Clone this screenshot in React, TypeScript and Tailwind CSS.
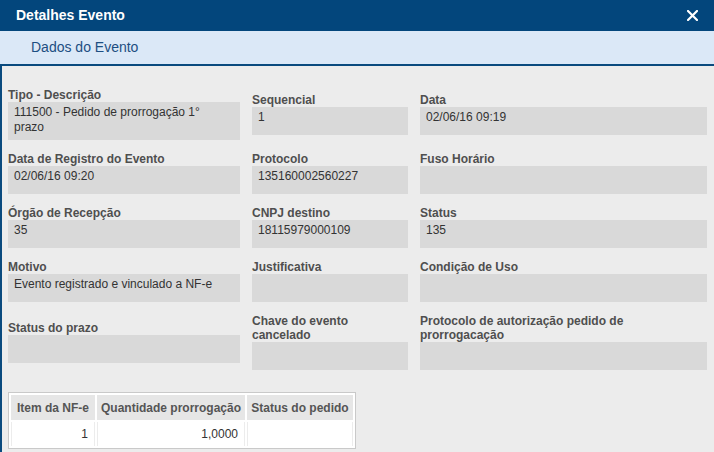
import React from "react";

type Field = { label: string; value?: string };

const fields: Field[] = [
  { label: "Tipo - Descrição", value: "111500 - Pedido de prorrogação 1° prazo" },
  { label: "Sequencial", value: "1" },
  { label: "Data", value: "02/06/16 09:19" },
  { label: "Data de Registro do Evento", value: "02/06/16 09:20" },
  { label: "Protocolo", value: "135160002560227" },
  { label: "Fuso Horário" },
  { label: "Órgão de Recepção", value: "35" },
  { label: "CNPJ destino", value: "18115979000109" },
  { label: "Status", value: "135" },
  { label: "Motivo", value: "Evento registrado e vinculado a NF-e" },
  { label: "Justificativa" },
  { label: "Condição de Uso" },
  { label: "Status do prazo" },
  { label: "Chave do evento cancelado" },
  { label: "Protocolo de autorização pedido de prorrogacação" },
];

function FieldBox({ label, value }: Field) {
  return (
    <div className="flex flex-col">
      <span className="text-[12px] font-bold leading-[14px] text-[#4f4f4f]">{label}</span>
      <div className="min-h-[28px] bg-[#d9d9d9] pl-[6px] pr-[14px] pt-[3px] pb-[5px] text-[12px] leading-[15px] text-[#333]">
        {value}
      </div>
    </div>
  );
}

export default function App() {
  return (
    <div
      className="flex h-[452px] w-[714px] flex-col overflow-hidden bg-[#ececec]"
      style={{ fontFamily: '"Liberation Sans", Arial, sans-serif' }}
    >
      {/* Title bar */}
      <header className="flex h-[31px] shrink-0 items-center justify-between bg-[#03467c] pl-[16px] pr-[16px]">
        <h1 className="text-[14px] font-bold text-white">Detalhes Evento</h1>
        <button className="flex h-[12px] w-[12px] items-center justify-center">
          <svg width="11" height="11" viewBox="0 0 11 11">
            <path d="M1 1 L10 10 M10 1 L1 10" stroke="white" strokeWidth="2.2" strokeLinecap="square" />
          </svg>
        </button>
      </header>

      {/* Section tab */}
      <div className="flex h-[35px] shrink-0 items-center border-b-2 border-[#0a4a7e] bg-[#dbe8f7] pl-[31px]">
        <span className="text-[14px] text-[#1d4e82]">Dados do Evento</span>
      </div>

      {/* Content */}
      <div className="flex-1 border-l-2 border-[#0a4a7e] pl-[6px] pt-[22px]">
        <div className="grid grid-cols-[232px_156px_287px] items-center gap-x-3 gap-y-3">
          {fields.map((f) => (
            <FieldBox key={f.label} {...f} />
          ))}
        </div>

        <table className="mt-[22px] table-fixed border-separate border-spacing-[2px] border border-[#c9c9c9] bg-white text-[12px]">
          <thead>
            <tr>
              <th className="h-[25px] w-[84px] bg-[#e6e6e6] p-0 font-bold text-[#555]">Item da NF-e</th>
              <th className="h-[25px] w-[148px] bg-[#e6e6e6] p-0 font-bold text-[#555]">Quantidade prorrogação</th>
              <th className="h-[25px] w-[106px] bg-[#e6e6e6] p-0 font-bold text-[#555]">Status do pedido</th>
            </tr>
          </thead>
          <tbody>
            <tr>
              <td className="h-[24px] border-x border-[#ececec] px-[6px] text-right text-[#333]">1</td>
              <td className="h-[24px] border-x border-[#ececec] px-[6px] text-right text-[#333]">1,0000</td>
              <td className="h-[24px] border-x border-[#ececec] px-[6px]"></td>
            </tr>
          </tbody>
        </table>
      </div>
    </div>
  );
}
